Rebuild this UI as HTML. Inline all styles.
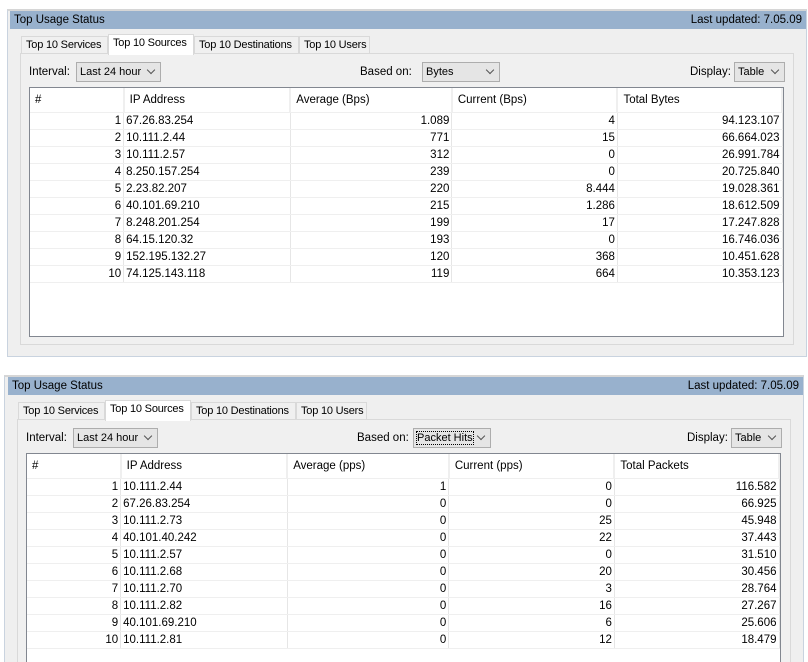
<!DOCTYPE html>
<html><head><meta charset="utf-8"><style>
*{box-sizing:border-box;margin:0;padding:0}
html,body{width:808px;height:662px;overflow:hidden}
body{background:#fff;font-family:"Liberation Sans",Arial,sans-serif;font-size:11.5px;color:#000;position:relative;white-space:nowrap}
.p{position:absolute;width:800px;height:348px;background:#efefef;border:1px solid #c9d3df;border-top:2px solid #d6d6d6;overflow:hidden}
.hd{position:absolute;left:2px;right:0;top:0;height:18px;background:#98b1cd;line-height:18px;padding:0 4px}
.hd span{position:absolute;right:4px;top:0}
.tab{position:absolute;top:25px;height:18px;border:1px solid #d9d9d9;border-bottom:none;background:#f0f0f0;line-height:17px;padding-left:4px;overflow:hidden;font-size:11px;letter-spacing:-0.2px}
.tab.a{top:23px;height:21px;background:#fff;z-index:2}
.cp{position:absolute;left:12px;top:42px;width:774px;height:292px;background:#f0f0f0;border:1px solid #d9d9d9}
.lbl{position:absolute;top:9px;line-height:18px}
.sel{position:absolute;top:8px;height:20px;border:1px solid #adadad;background:#e5e5e5;line-height:18px;padding-left:3px;font-size:11px}
.sel i{position:absolute;right:6px;top:4px;width:6px;height:6px;border-right:1px solid #555;border-bottom:1px solid #555;transform:rotate(45deg)}
.tb{position:absolute;left:8px;top:33px;width:755px;height:250px;background:#fff;border:1px solid #828790;overflow:hidden}
table{border-collapse:collapse;position:absolute;left:0;top:0}
td{height:17px;line-height:16px;border-right:1px solid #e6e6e6;border-bottom:1px solid #efefef;padding:0 2px;white-space:nowrap}
tr.h td{height:24px;border-right:2px solid #efefef;padding-left:5px}
td.r{text-align:right}
</style></head><body>

<div class="p" style="left:7px;top:9px">
<div class="hd">Top Usage Status<span>Last updated: 7.05.09</span></div>
<div class="tab" style="left:13px;width:87px">Top 10 Services</div>
<div class="tab a" style="left:100px;width:86px">Top 10 Sources</div>
<div class="tab" style="left:186px;width:105px">Top 10 Destinations</div>
<div class="tab" style="left:291px;width:71px">Top 10 Users</div>
<div class="cp">
<div class="lbl" style="left:8px">Interval:</div>
<div class="sel" style="left:55px;width:85px">Last 24 hour<i></i></div>
<div class="lbl" style="left:339px">Based on:</div>
<div class="sel" style="left:401px;width:78px">Bytes<i></i></div>
<div class="lbl" style="left:669px">Display:</div>
<div class="sel" style="left:713px;width:51px">Table<i></i></div>
<div class="tb"><table>
<tr class="h"><td style="width:94px">#</td><td style="width:167px">IP Address</td><td style="width:162px">Average (Bps)</td><td style="width:166px">Current (Bps)</td><td style="width:165px">Total Bytes</td></tr>
<tr><td class="r">1</td><td>67.26.83.254</td><td class="r">1.089</td><td class="r">4</td><td class="r">94.123.107</td></tr>
<tr><td class="r">2</td><td>10.111.2.44</td><td class="r">771</td><td class="r">15</td><td class="r">66.664.023</td></tr>
<tr><td class="r">3</td><td>10.111.2.57</td><td class="r">312</td><td class="r">0</td><td class="r">26.991.784</td></tr>
<tr><td class="r">4</td><td>8.250.157.254</td><td class="r">239</td><td class="r">0</td><td class="r">20.725.840</td></tr>
<tr><td class="r">5</td><td>2.23.82.207</td><td class="r">220</td><td class="r">8.444</td><td class="r">19.028.361</td></tr>
<tr><td class="r">6</td><td>40.101.69.210</td><td class="r">215</td><td class="r">1.286</td><td class="r">18.612.509</td></tr>
<tr><td class="r">7</td><td>8.248.201.254</td><td class="r">199</td><td class="r">17</td><td class="r">17.247.828</td></tr>
<tr><td class="r">8</td><td>64.15.120.32</td><td class="r">193</td><td class="r">0</td><td class="r">16.746.036</td></tr>
<tr><td class="r">9</td><td>152.195.132.27</td><td class="r">120</td><td class="r">368</td><td class="r">10.451.628</td></tr>
<tr><td class="r">10</td><td>74.125.143.118</td><td class="r">119</td><td class="r">664</td><td class="r">10.353.123</td></tr>
</table></div>
</div>
</div>

<div class="p" style="left:4px;top:375px;height:287px;border-bottom:none">
<div class="hd" style="left:3px">Top Usage Status<span>Last updated: 7.05.09</span></div>
<div class="tab" style="left:13px;width:87px">Top 10 Services</div>
<div class="tab a" style="left:100px;width:86px">Top 10 Sources</div>
<div class="tab" style="left:186px;width:105px">Top 10 Destinations</div>
<div class="tab" style="left:291px;width:71px">Top 10 Users</div>
<div class="cp" style="height:250px;border-bottom:none">
<div class="lbl" style="left:8px">Interval:</div>
<div class="sel" style="left:55px;width:85px">Last 24 hour<i></i></div>
<div class="lbl" style="left:339px">Based on:</div>
<div class="sel" style="left:395px;width:78px"><span style="outline:1px dotted #000">Packet Hits</span><i></i></div>
<div class="lbl" style="left:669px">Display:</div>
<div class="sel" style="left:713px;width:51px">Table<i></i></div>
<div class="tb" style="height:220px;border-bottom:none"><table>
<tr class="h"><td style="width:94px">#</td><td style="width:167px">IP Address</td><td style="width:162px">Average (pps)</td><td style="width:166px">Current (pps)</td><td style="width:165px">Total Packets</td></tr>
<tr><td class="r">1</td><td>10.111.2.44</td><td class="r">1</td><td class="r">0</td><td class="r">116.582</td></tr>
<tr><td class="r">2</td><td>67.26.83.254</td><td class="r">0</td><td class="r">0</td><td class="r">66.925</td></tr>
<tr><td class="r">3</td><td>10.111.2.73</td><td class="r">0</td><td class="r">25</td><td class="r">45.948</td></tr>
<tr><td class="r">4</td><td>40.101.40.242</td><td class="r">0</td><td class="r">22</td><td class="r">37.443</td></tr>
<tr><td class="r">5</td><td>10.111.2.57</td><td class="r">0</td><td class="r">0</td><td class="r">31.510</td></tr>
<tr><td class="r">6</td><td>10.111.2.68</td><td class="r">0</td><td class="r">20</td><td class="r">30.456</td></tr>
<tr><td class="r">7</td><td>10.111.2.70</td><td class="r">0</td><td class="r">3</td><td class="r">28.764</td></tr>
<tr><td class="r">8</td><td>10.111.2.82</td><td class="r">0</td><td class="r">16</td><td class="r">27.267</td></tr>
<tr><td class="r">9</td><td>40.101.69.210</td><td class="r">0</td><td class="r">6</td><td class="r">25.606</td></tr>
<tr><td class="r">10</td><td>10.111.2.81</td><td class="r">0</td><td class="r">12</td><td class="r">18.479</td></tr>
</table></div>
</div>
</div>
</body></html>
